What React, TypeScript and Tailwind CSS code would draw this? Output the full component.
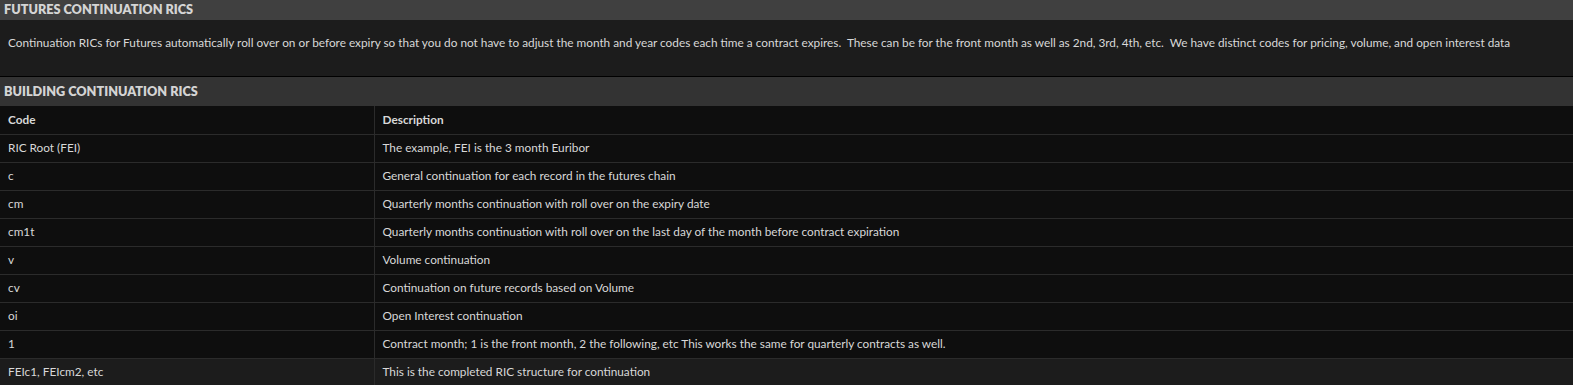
import * as React from "react";

const rows: [string, string][] = [
  ["RIC Root (FEI)", "The example, FEI is the 3 month Euribor"],
  ["c", "General continuation for each record in the futures chain"],
  ["cm", "Quarterly months continuation with roll over on the expiry date"],
  ["cm1t", "Quarterly months continuation with roll over on the last day of the month before contract expiration"],
  ["v", "Volume continuation"],
  ["cv", "Continuation on future records based on Volume"],
  ["oi", "Open Interest continuation"],
  ["1", "Contract month; 1 is the front month, 2 the following, etc This works the same for quarterly contracts as well."],
  ["FEIc1, FEIcm2, etc", "This is the completed RIC structure for continuation"],
];

function SectionTitle({ children, className }: { children: React.ReactNode; className?: string }) {
  return (
    <div className={"flex items-center px-[4px] text-[12.7px] font-extrabold uppercase text-[#d4d4d4] " + (className ?? "")}>
      {children}
    </div>
  );
}

export default function App() {
  return (
    <div className="w-[1573px] h-[385px] overflow-hidden bg-[#0e0e0e] font-['Lato',sans-serif] text-[11.8px] text-[#d8d8d8]">
      <SectionTitle className="h-[20px] bg-[#404040]">Futures Continuation RICs</SectionTitle>
      <div className="h-[57px] bg-[#1c1c1c] px-[8px] pt-[14px] border-b border-black">
        Continuation RICs for Futures automatically roll over on or before expiry so that you do not have to adjust the month and year codes each time a contract expires.&nbsp; These can be for the front month as well as 2nd, 3rd, 4th, etc.&nbsp; We have distinct codes for pricing, volume, and open interest data
      </div>
      <SectionTitle className="h-[29px] bg-[#333333]">Building Continuation RICs</SectionTitle>
      <table className="w-full border-collapse">
        <thead>
          <tr className="h-[28px] border-b border-[#2b2b2b]">
            <th className="w-[374px] border-r border-[#2b2b2b] px-[8px] text-left font-bold">Code</th>
            <th className="px-[8px] text-left font-bold">Description</th>
          </tr>
        </thead>
        <tbody>
          {rows.map(([code, desc], i) => (
            <tr
              key={code}
              className={
                "h-[28px] border-b border-[#2b2b2b] " + (i === rows.length - 1 ? "bg-[#1c1c1c]" : "")
              }
            >
              <td className="border-r border-[#2b2b2b] px-[8px]">{code}</td>
              <td className="px-[8px]">{desc}</td>
            </tr>
          ))}
        </tbody>
      </table>
    </div>
  );
}
